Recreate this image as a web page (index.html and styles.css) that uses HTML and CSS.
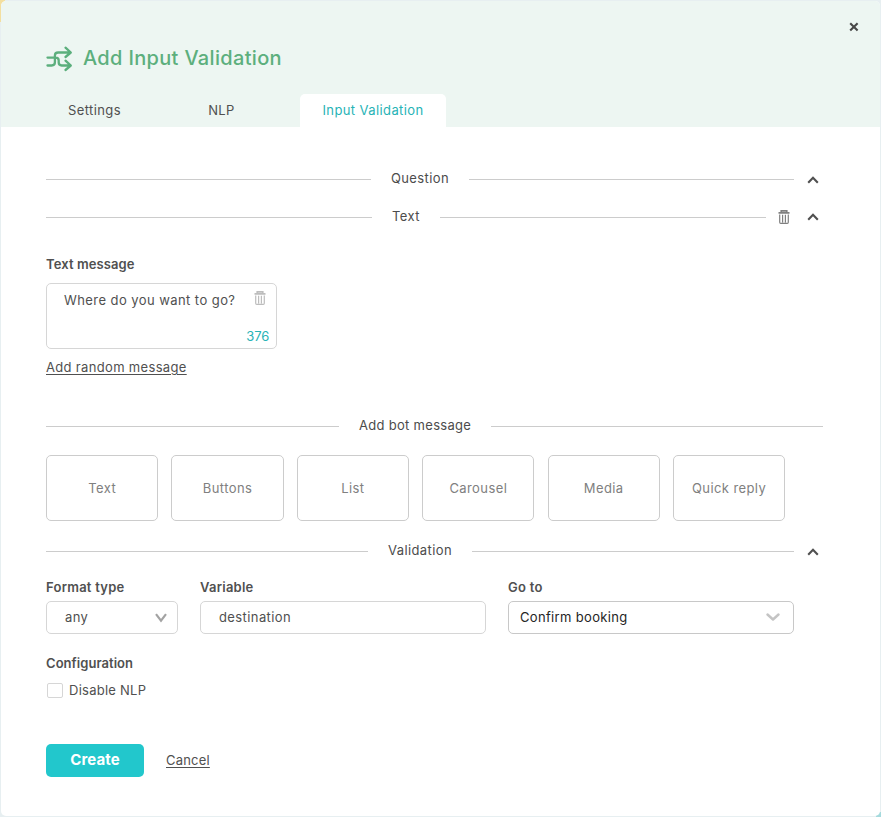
FILE: index.html
```html
<!DOCTYPE html>
<html lang="en">
<head>
<meta charset="utf-8">
<title>Add Input Validation</title>
<link rel="stylesheet" href="styles.css">
</head>
<body>
<svg class="defs" width="0" height="0" aria-hidden="true">
  <symbol id="trash" viewBox="0 0 12 14">
    <path d="M3.2 2.2V.9h5.600v1.300M.5 2.900h11" fill="none" stroke="currentColor" stroke-width="1.600"/>
    <path d="M1.700 4.600v7.600q0 1.100 1 1.100h6.600q1 0 1-1.100V4.600M4.600 4.800v7.600M7.400 4.800v7.600" fill="none" stroke="currentColor" stroke-width="1.200"/>
  </symbol>
  <symbol id="up" viewBox="0 0 12 8">
    <path d="M1.200 6.700 6 1.700l4.800 5" fill="none" stroke="currentColor" stroke-width="2.100"/>
  </symbol>
</svg>
<div class="modal">
  <header class="header">
    <button class="close" aria-label="Close"><svg width="10" height="10" viewBox="0 0 10 10"><path d="M1.200 1.200l7.400 7.400M8.600 1.200 1.200 8.600" stroke="currentColor" stroke-width="2.100"/></svg></button>
    <div class="title">
      <svg width="28" height="26" viewBox="0 0 28 26" fill="none" stroke="currentColor" stroke-width="2.300" stroke-linecap="round" stroke-linejoin="round"><path d="M1.500 19.500h4.200q3.200 0 3.200-3.200V9.500q0-3 3.200-3h12.500M19.500 1.700 24.800 6.500l-5.300 4.500M19.500 14.700l5.300 4.800-5.300 4.500M1.500 11.600h8.200q3 0 3 3v2q0 2.900 3 2.900h9"/></svg>
      <h1>Add Input Validation</h1>
    </div>
    <nav class="tabs">
      <a class="tab tab-settings">Settings</a>
      <a class="tab tab-nlp">NLP</a>
      <a class="tab active">Input Validation</a>
    </nav>
  </header>
  <main class="content">
    <div class="divider"><span>Question</span><i></i><svg class="up"><use href="#up"/></svg></div>
    <div class="divider text-row"><span>Text</span><i></i><svg class="trash"><use href="#trash"/></svg><svg class="up"><use href="#up"/></svg></div>
    <div class="label message-label">Text message</div>
    <div class="message">
      <div class="message-top"><span class="question">Where do you want to go?</span><svg class="trash"><use href="#trash"/></svg></div>
      <span class="count">376</span>
    </div>
    <a class="link random">Add random message</a>
    <div class="divider bot"><span>Add bot message</span><i></i></div>
    <div class="cards">
      <button>Text</button><button>Buttons</button><button>List</button><button>Carousel</button><button>Media</button><button class="quick">Quick reply</button>
    </div>
    <div class="divider validation"><span>Validation</span><i></i><svg class="up"><use href="#up"/></svg></div>
    <div class="fields">
      <div><div class="label">Format type</div><div class="input"><span>any</span><svg width="12" height="10" viewBox="0 0 12 10"><path d="M1 1.200 6 7.700 11 1.200" fill="none" stroke="#a3a3a3" stroke-width="2.200"/></svg></div></div>
      <div><div class="label">Variable</div><div class="input"><span>destination</span></div></div>
      <div><div class="label">Go to</div><div class="input goto"><span>Confirm booking</span><svg width="14" height="9" viewBox="0 0 14 9"><path d="m1.500 1.500 5.500 5 5.500-5" fill="none" stroke="#c4c4c4" stroke-width="2.400" stroke-linecap="round" stroke-linejoin="round"/></svg></div></div>
    </div>
    <div class="label config">Configuration</div>
    <label class="check"><span class="box"></span><span class="check-text">Disable NLP</span></label>
    <div class="actions"><button class="create">Create</button><a class="link cancel">Cancel</a></div>
  </main>
</div>
</body>
</html>
```
FILE: styles.css
```css
* { box-sizing: border-box; }
body {
  margin: 0;
  height: 817px;
  overflow: hidden;
  padding: 1px 1px 1px;
  background: linear-gradient(#f3dfa0, #f3dfa0) 0 0 / 5px 22px no-repeat,
    linear-gradient(#a5dadd, #a5dadd) 100% 100% / 5px 5px no-repeat, #e7eff1;
  font: 13px/20px Inter, sans-serif;
  letter-spacing: .4px;
  color: #505050;
}
.defs { position: absolute; }
button { font: inherit; letter-spacing: inherit; }
.modal { height: 815px; border-radius: 5px; background: #fff; overflow: hidden; }
.header { height: 126px; background: #edf6f2; position: relative; padding: 45px 45px 0; }
.close { position: absolute; right: 21px; top: 21px; width: 10px; height: 10px; padding: 0; border: 0; background: none; color: #484848; display: flex; }
.title { display: flex; align-items: center; height: 26px; color: #5caf7d; }
.title h1 { margin: 0 0 0 9px; font-size: 20px; line-height: 24px; padding-bottom: 2px; font-weight: 500; letter-spacing: .33px; white-space: nowrap; }
.tabs { display: flex; margin-top: 22px; }
.tab { height: 33px; line-height: 33px; text-align: center; }
.tab-settings { width: 97px; }
.tab-nlp { width: 157px; }
.active { width: 146px; background: #fff; border-radius: 5px 5px 0 0; color: #27b3b6; }
.content { padding: 42px 57px 0 45px; }
.divider { display: flex; align-items: center; height: 21px; line-height: 18px; }
.divider::before, .divider i { content: ""; flex: 1; height: 1px; background: #ccc; }
.divider > span { margin: 0 20px; padding-bottom: 3px; color: #4c4c4c; }
.up { width: 12px; height: 8px; margin: 0 4px 0 13px; flex: none; }
.trash { width: 12px; height: 14px; flex: none; color: #808080; }
.divider .trash { margin: -2px 10px 0 12px; }
.divider .trash + .up { margin-left: 7px; }
.text-row { margin-top: 17px; }
.text-row .up { margin-top: -2px; }
.label { font-weight: 600; height: 20px; line-height: 19px; letter-spacing: .25px; }
.message-label { margin-top: 27px; letter-spacing: .1px; }
.message { width: 231px; height: 66px; margin-top: 8px; padding: 7px; border: 1px solid #d6d6d6; border-radius: 5px; }
.message-top { display: flex; justify-content: space-between; padding: 0 3px 0 10px; height: 36px; }
.message .trash { color: #bdbdbd; }
.question { white-space: nowrap; line-height: 19px; letter-spacing: .43px; }
.count { display: block; line-height: 20px; margin-top: -1px; text-align: right; color: #27b3b6; letter-spacing: -.2px; }
.link { text-decoration: underline; text-underline-offset: 2px; }
.random { display: block; width: max-content; margin-top: 9px; height: 20px; line-height: 18px; letter-spacing: .33px; }
.bot { margin-top: 38px; letter-spacing: .3px; }
.bot::before { flex: 0 0 293px; }
.cards { display: grid; grid-template-columns: repeat(6, 112.300px); gap: 13.100px; margin-top: 18px; }
.cards button { height: 66px; padding: 0 0 1px; border: 1px solid #ccc; border-radius: 5px; background: #fff; color: #808080; white-space: nowrap; }
.validation { margin-top: 20px; }
.fields { display: grid; grid-template-columns: 132px 286px 286px; gap: 22px; margin-top: 16px; }
.input { display: flex; align-items: center; justify-content: space-between; height: 33px; margin-top: 3px; padding: 0 10px 0 18px; border: 1px solid #d6d6d6; border-radius: 5px; }
.input span { line-height: 19px; padding-bottom: 1px; }
.goto { padding: 0 13px 0 11px; border-color: #c8c8c8; color: #252525; letter-spacing: .33px; }
.config { margin-top: 20px; letter-spacing: .05px; }
.check { display: flex; align-items: center; gap: 6px; height: 20px; margin-top: 7px; padding-left: 1px; }
.check-text { line-height: 18px; padding-bottom: 2px; letter-spacing: .25px; }
.box { width: 16px; height: 15px; margin-top: -1px; border: 1px solid #d6d6d6; border-radius: 2px; }
.actions { display: flex; align-items: center; margin-top: 43px; }
.create { width: 98px; height: 33px; border: 0; border-radius: 5px; background: #22c7cc; color: #fff; font-size: 15px; font-weight: 700; padding: 0 0 1px; letter-spacing: .1px; }
.cancel { margin-left: 22px; padding-bottom: 2px; letter-spacing: .2px; }
```
